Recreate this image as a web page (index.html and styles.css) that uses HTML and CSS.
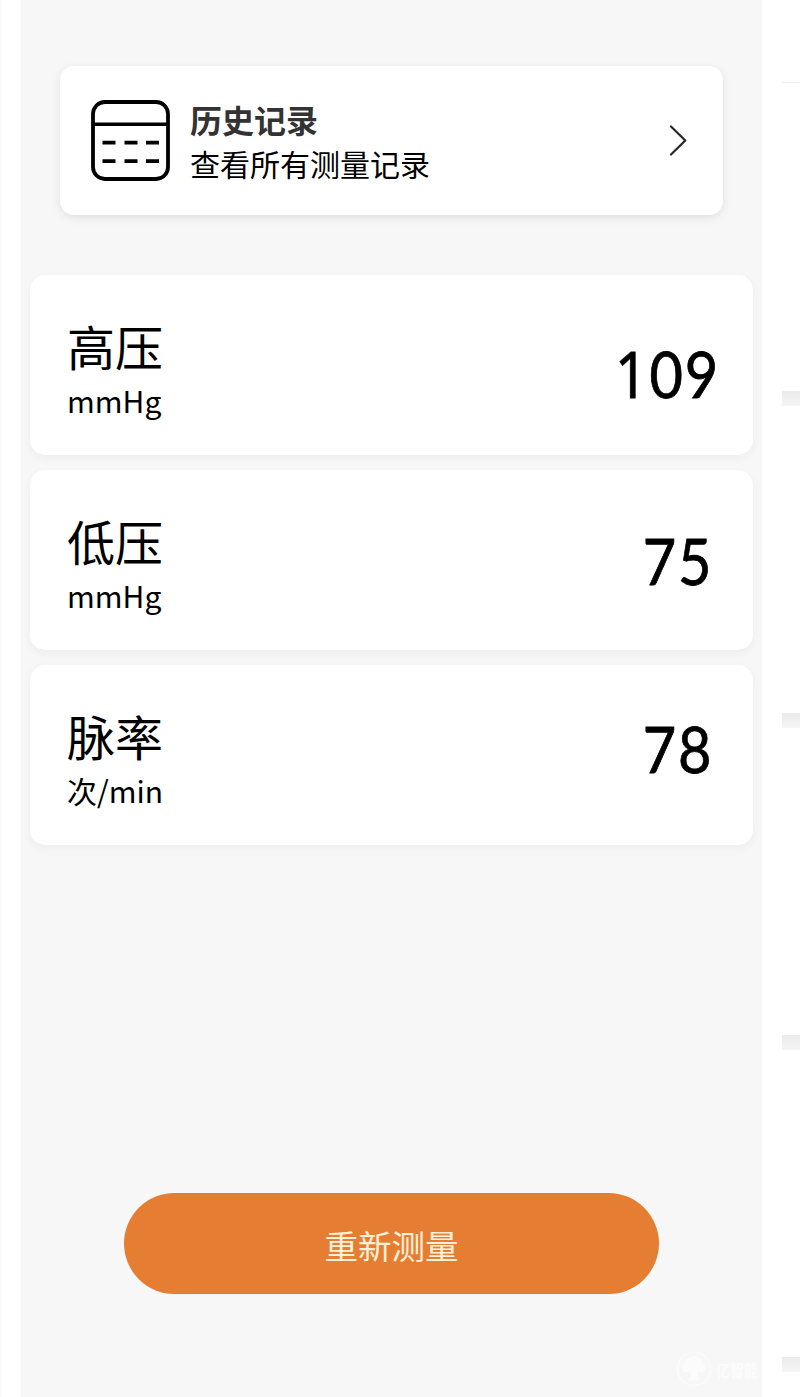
FILE: index.html
```html
<!DOCTYPE html>
<html lang="zh-CN">
<head>
<meta charset="utf-8">
<title>测量结果</title>
<link rel="stylesheet" href="styles.css">
</head>
<body>
<div class="page">
  <main class="screen">
    <section class="history">
      <svg class="calendar" viewBox="0 0 80 82" fill="none" stroke="#000">
        <rect x="3" y="2" width="75" height="77" rx="12" stroke-width="3.8"/>
        <path d="M3 24.300H77" stroke-width="3.6"/>
        <path d="M12.500 42.700h13M34.500 42.700h13M56 42.700h13M12.500 61.200h13M34.500 61.200h13M56 61.200h13" stroke-width="3.800"/>
      </svg>
      <div class="history-text">
        <h1 class="history-title">历史记录</h1>
        <p class="history-sub">查看所有测量记录</p>
      </div>
      <svg class="chevron" viewBox="0 0 20 32" fill="none" stroke="#262626" stroke-width="2.200" stroke-linecap="round" stroke-linejoin="round"><path d="M3 1.500L17.300 15.500L3 29.500"/></svg>
    </section>
    <section class="readings">
      <article class="card">
        <div><h2 class="name">高压</h2><p class="unit">mmHg</p></div>
        <div class="value value-high"><span class="one">1</span>09</div>
      </article>
      <article class="card">
        <div><h2 class="name">低压</h2><p class="unit">mmHg</p></div>
        <div class="value">75</div>
      </article>
      <article class="card">
        <div><h2 class="name">脉率</h2><p class="unit">次/min</p></div>
        <div class="value value-pulse">78</div>
      </article>
    </section>
    <button class="again">重新测量</button>
    <div class="watermark">
      <svg class="tree" viewBox="0 0 36 36"><circle cx="18" cy="18" r="16.500" fill="none" stroke="#fff" stroke-width="1.500"/><path d="M9 21a5 5 0 0 1 0-9a9 7 0 0 1 18 0a5 5 0 0 1 0 9h-6v5l4 3H11l4-3v-5z" fill="#fff"/></svg>
      <span class="mark-text">亿智能</span>
    </div>
  </main>
  <aside class="edge">
    <i class="rule"></i><i class="band"></i><i class="band"></i><i class="band"></i><i class="band"></i>
  </aside>
</div>
</body>
</html>
```
FILE: styles.css
```css
* { box-sizing: border-box; margin: 0; padding: 0; }
body { background: #fff; font-family: "Noto Sans CJK SC", sans-serif; color: #000; }
.page { display: grid; grid-template-columns: 741px 18px; column-gap: 20px; height: 1397px; padding-left: 21px; overflow: hidden; background: linear-gradient(90deg, #f8f8f8 0, #fff 3px); }
.screen { position: relative; display: flex; flex-direction: column; height: 1397px; padding: 66px 9px 0; background: #f7f7f7; overflow: hidden; }
.history { display: flex; align-items: center; height: 149px; margin: 0 30px; padding: 0 35px 0 30px; background: #fff; border-radius: 14px; box-shadow: 0 3px 10px rgba(0,0,0,.09); }
.calendar { width: 80px; height: 82px; }
.history-text { flex: 1; margin-left: 20px; }
.history-title { font-size: 32px; line-height: 44px; font-weight: 700; color: #333; }
.history-sub { font-size: 30px; line-height: 44px; }
.chevron { width: 20px; height: 32px; }
.readings { display: grid; gap: 15px; margin-top: 60px; }
.card { display: flex; justify-content: space-between; height: 180px; padding: 35px 35px 0 37px; background: #fff; border-radius: 15px; box-shadow: 0 3px 10px rgba(0,0,0,.045); }
.name { font-size: 48px; line-height: 70px; font-weight: 400; }
.unit { font-size: 30px; line-height: 41px; }
.value { height: 80px; margin: 16px 5px 0 0; font: 400 64px/80px Lato, sans-serif; letter-spacing: 2px; -webkit-text-stroke: .8px #000; transform: scaleX(.9); transform-origin: right center; }
.value-high { margin: 24px -2px 0 0; }
.value-pulse { margin-top: 9px; }
.one { font-family: "Noto Sans", sans-serif; }
.again { width: 535px; height: 101px; margin: 348px auto 0; border: 0; border-radius: 51px; background: #e57e33; color: #fff1d8; font: 400 33.500px/101px "Noto Sans CJK SC", sans-serif; padding-top: 1px; }
.watermark { position: absolute; left: 655px; top: 1351px; display: flex; align-items: center; gap: 4px; white-space: nowrap; opacity: .6; color: #fff; }
.tree { width: 36px; height: 36px; }
.mark-text { font-size: 14px; line-height: 24px; font-weight: 700; transform: scaleY(1.25); }
.edge { display: flex; flex-direction: column; padding-top: 82px; }
.rule { height: 1px; margin-bottom: 308px; background: #eee; }
.band { height: 15px; margin-bottom: 307px; flex-shrink: 0; background: linear-gradient(#ebebeb, #f5f5f5); }
```
